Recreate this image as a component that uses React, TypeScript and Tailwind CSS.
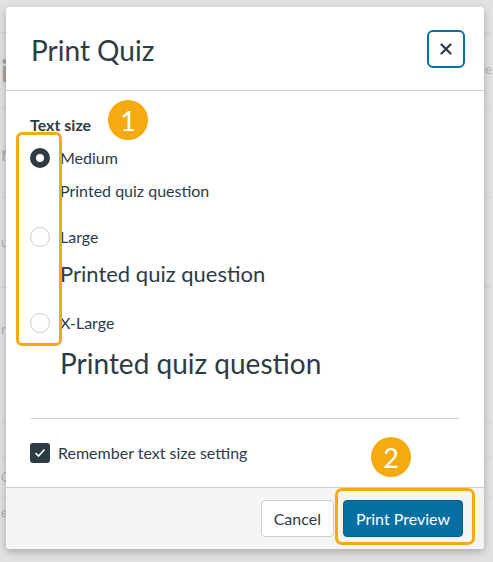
import React, { useState } from "react";

const font = { fontFamily: "Lato, 'Open Sans', sans-serif" };

// block: height of the sample area under each option, sample: font + line height
const sizes = [
  { id: "medium", label: "Medium", sample: "text-[16px] leading-[20px]", block: "h-[53px]" },
  { id: "large", label: "Large", sample: "text-[22px] leading-[28px]", block: "h-[60px]" },
  { id: "xlarge", label: "X-Large", sample: "text-[28px] leading-[34px]", block: "h-[82px]" },
];

function Radio({ checked }: { checked: boolean }) {
  return checked ? (
    <span className="w-5 h-5 rounded-full border-[6px] border-[#2d3b45] bg-white shrink-0" />
  ) : (
    <span className="w-5 h-5 rounded-full border border-[#c7cdd1] bg-white shrink-0" />
  );
}

function Badge({ n }: { n: number }) {
  return (
    <div className="w-10 h-10 rounded-full bg-[#f5aa0f] text-white flex items-center justify-center text-[27px] leading-none">
      {n}
    </div>
  );
}

export default function App() {
  const [size, setSize] = useState("medium");
  const [remember, setRemember] = useState(true);

  return (
    <div className="relative w-[493px] h-[562px] overflow-hidden bg-[#e2e2e2]" style={font}>
      {/* dimmed page behind the modal */}
      <div className="flex flex-col text-[#b3b3b3] pl-[1px] pr-[1px]">
        <div className="h-[33px] border-b border-[#d6d6d6]" />
        <div className="h-[75px] border-b border-[#d6d6d6] flex items-center justify-between">
          <span className="text-[30px] font-bold text-[#a6a6a6]">ilo</span>
          <span className="text-[13px]">Previe</span>
        </div>
        <div className="h-[90px] border-b border-[#d6d6d6] flex items-center">
          <span className="text-[22px]">rt</span>
        </div>
        <div className="h-[90px] border-b border-[#d6d6d6] flex items-center">
          <span className="text-[13px]">u</span>
        </div>
        <div className="h-[135px] border-b border-[#d6d6d6] flex items-start pt-8">
          <span className="text-[13px]">r</span>
        </div>
        <div className="h-[35px] border-b border-[#d6d6d6]" />
        <div className="h-[40px] border-b border-[#d6d6d6] flex items-center">
          <span className="text-[13px]">C</span>
        </div>
        <div className="h-[30px] flex items-center">
          <span className="text-[13px]">e</span>
        </div>
      </div>

      {/* modal */}
      <div className="absolute left-[6px] top-[7px] w-[478px] h-[542px] bg-white rounded-[4px] shadow-[0_3px_8px_rgba(0,0,0,0.25)] flex flex-col text-[#2d3b45] overflow-hidden">
        <div className="h-[84px] shrink-0 border-b border-[#c7cdd1] flex items-center justify-between pl-[25px] pr-[19px]">
          <h2 className="text-[28px] leading-none mt-[2px]">Print Quiz</h2>
          <button className="w-[38px] h-[38px] rounded-[6px] border-2 border-[#0770a3] flex items-center justify-center">
            <svg width="12" height="12" viewBox="0 0 12 12">
              <path d="M1.5 1.5 L10.5 10.5 M10.5 1.5 L1.5 10.5" stroke="#2d3b45" strokeWidth="2.2" strokeLinecap="round" />
            </svg>
          </button>
        </div>

        <div className="flex-1 flex flex-col px-[24px]">
          <div className="text-[16px] font-bold mt-[22px] h-[24px] flex items-center">Text size</div>
          <div className="flex flex-col mt-[8px]">
            {sizes.map((s) => (
              <div key={s.id} className="flex flex-col" onClick={() => setSize(s.id)}>
                <div className="flex items-center gap-[10px] h-[26px]">
                  <Radio checked={size === s.id} />
                  <span className="text-[16px]">{s.label}</span>
                </div>
                <div className={`pl-[30px] pt-[10px] ${s.block} ${s.sample}`}>Printed quiz question</div>
              </div>
            ))}
          </div>
          <div className="border-t border-[#c7cdd1] mx-[1px]" />
          <label className="flex items-center gap-[8px] mt-[24px] h-[20px]" onClick={() => setRemember(!remember)}>
            <span className="w-5 h-5 rounded-[3px] bg-[#2d3b45] flex items-center justify-center shrink-0">
              {remember && (
                <svg width="12" height="10" viewBox="0 0 12 10">
                  <path d="M1.5 5 L4.5 8 L10.5 1.5" stroke="white" strokeWidth="1.6" fill="none" />
                </svg>
              )}
            </span>
            <span className="text-[16px]">Remember text size setting</span>
          </label>
        </div>

        <div className="h-[62px] shrink-0 bg-[#f5f5f5] border-t border-[#c7cdd1] flex items-center justify-end gap-[9px] pr-[21px]">
          <button className="h-[37px] px-[12px] rounded-[4px] bg-white border border-[#c7cdd1] text-[16px] text-[#2d3b45]">
            Cancel
          </button>
          <button className="h-[37px] px-[12px] rounded-[4px] bg-[#0770a3] border border-[#0b5d86] text-[16px] text-white">
            Print Preview
          </button>
        </div>
      </div>

      {/* annotations */}
      <div className="absolute left-[16px] top-[132px] w-[46px] h-[214px] border-[3px] border-[#f5aa0f] rounded-[6px]" />
      <div className="absolute left-[108px] top-[100px]">
        <Badge n={1} />
      </div>
      <div className="absolute left-[335px] top-[488px] w-[140px] h-[57px] border-[3px] border-[#f5aa0f] rounded-[7px]" />
      <div className="absolute left-[371px] top-[437px]">
        <Badge n={2} />
      </div>
    </div>
  );
}
